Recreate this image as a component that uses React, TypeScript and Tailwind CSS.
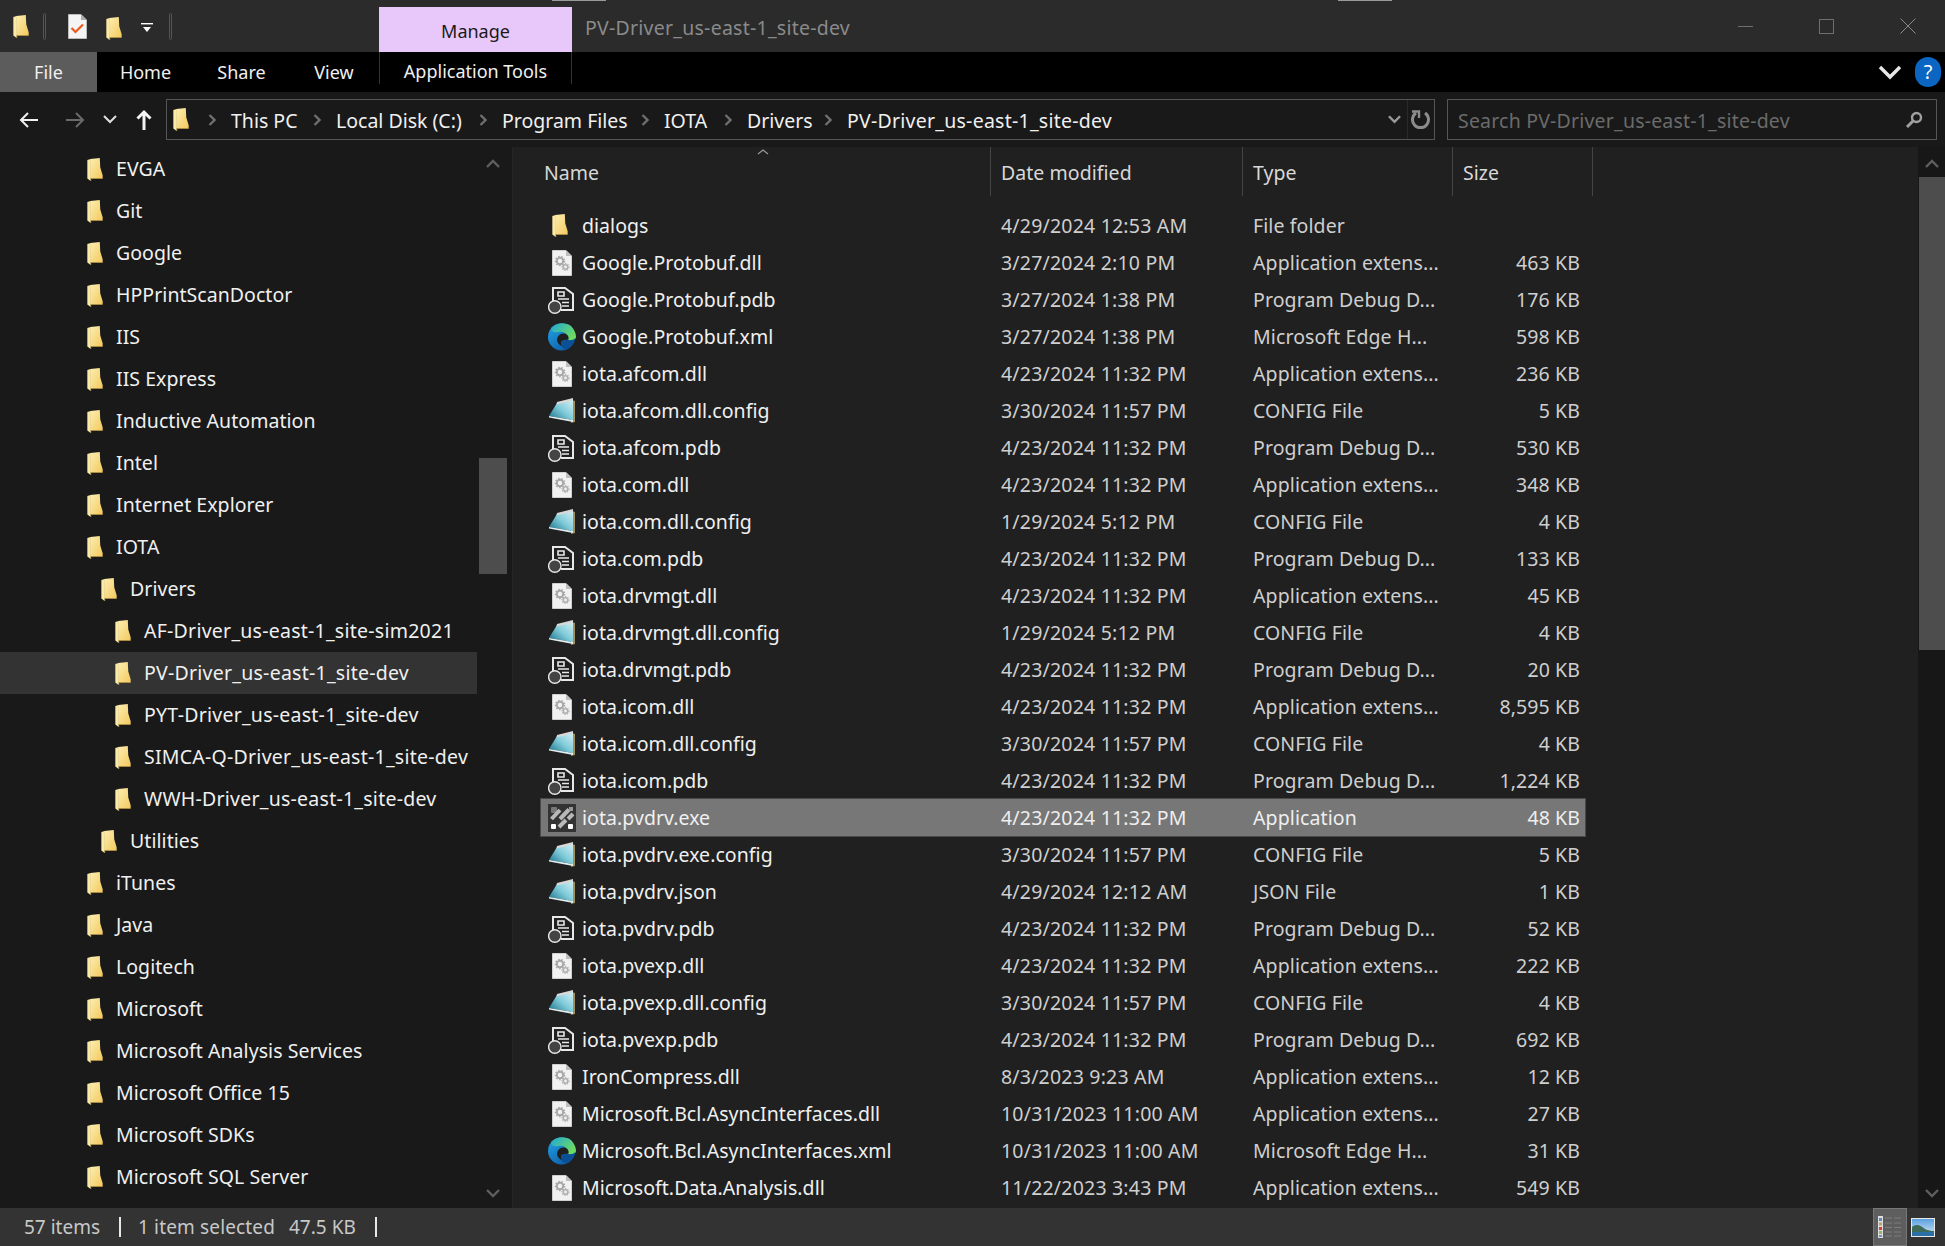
import React from "react";

const Folder = ({ className = "" }: { className?: string }) => (
  <svg viewBox="0 0 16 24" className={"w-[16px] h-[23px] shrink-0 " + className}>
    <defs>
      <linearGradient id="fg" x1="0" y1="0" x2="1" y2="1">
        <stop offset="0" stopColor="#fdeeb0" />
        <stop offset="1" stopColor="#f3c95f" />
      </linearGradient>
    </defs>
    <path d="M3 1 L13 0 L13.5 10 L16 18 V21 H3 Z" fill="url(#fg)" />
    <path d="M0 2 L3.5 1 V24 L0 21.5 Z" fill="#fbe9a6" />
    <path d="M3.5 21 H16 V22 H4 V24 H3.5 Z" fill="#caa24a" />
  </svg>
);

const PageGears = () => (
  <svg viewBox="0 0 20 26" className="w-[20px] h-[26px]">
    <path d="M0.5 0.5 H14 L19.5 6 V25.5 H0.5 Z" fill="#f1f1f1" stroke="#cfcfcf" />
    <path d="M14 0.5 V6 H19.5 Z" fill="#bdbdbd" />
    <circle cx="8" cy="11" r="3.2" fill="none" stroke="#a8a8a8" strokeWidth="2" />
    <circle cx="8" cy="11" r="4.6" fill="none" stroke="#a8a8a8" strokeWidth="1.4" strokeDasharray="1.6 1.6" />
    <circle cx="13.5" cy="17" r="2.2" fill="none" stroke="#b0b0b0" strokeWidth="1.6" />
    <circle cx="13.5" cy="17" r="3.5" fill="none" stroke="#b0b0b0" strokeWidth="1.2" strokeDasharray="1.3 1.3" />
  </svg>
);

const Pdb = () => (
  <svg viewBox="0 0 28 28" className="w-[28px] h-[28px]">
    <path d="M5 15 V2 H17 L25 8 V24 H13" fill="none" stroke="#e8e8e8" strokeWidth="2" />
    <path d="M10 6 H16 V10 H10 Z M10 13 H21 M14 16.5 H21 M14 20 H21" fill="none" stroke="#e8e8e8" strokeWidth="1.6" />
    <circle cx="6.8" cy="21" r="6.2" fill="#444444" stroke="#e8e8e8" strokeWidth="1.4" />
  </svg>
);

const Config = () => (
  <svg viewBox="0 0 26 25" className="w-[26px] h-[25px]">
    <defs>
      <linearGradient id="cg" x1="0" y1="1" x2="1" y2="0">
        <stop offset="0" stopColor="#156f88" />
        <stop offset="0.5" stopColor="#7fcbd9" />
        <stop offset="1" stopColor="#d9f1f5" />
      </linearGradient>
    </defs>
    <path d="M23 2 L26 3 V24 L22 25 Z" fill="#a08f5f" />
    <path d="M8 5 L24 1 V22 L0 18 Z" fill="url(#cg)" />
    <path d="M0 18 L24 22 V24 L0 19.5 Z" fill="#dfeef1" />
    <path d="M8 4 L24 0 V2.5 L7.5 6.5 Z" fill="#d8d8d8" />
  </svg>
);

const Edge = () => (
  <svg viewBox="0 0 28 28" className="w-[28px] h-[28px]">
    <defs>
      <linearGradient id="eb" x1="0" y1="0" x2="0.7" y2="1">
        <stop offset="0" stopColor="#25a5e8" />
        <stop offset="1" stopColor="#0c5ea8" />
      </linearGradient>
      <linearGradient id="eg" x1="0" y1="0" x2="1" y2="0.6">
        <stop offset="0" stopColor="#1fa9d8" />
        <stop offset="1" stopColor="#6fdc5f" />
      </linearGradient>
    </defs>
    <circle cx="13.5" cy="14" r="13.5" fill="url(#eb)" />
    <path d="M3 5 C8 -1 18 -1 23 3 C26 6 28 10 28 14 C28 17 24 18.5 20 17 C21 12 16 8 11 9 C7 10 3 9 3 5 Z" fill="url(#eg)" />
    <path d="M10 20 C7 15 12 9 18 11 C20 12 21 14 20.5 16.5 C17 17 13 17 13 20 C13 21 14 23 17 24 C14 24 11.5 22 10 20 Z" fill="#1f1f1f" />
    <path d="M13 20 C13 17.5 16 17 20 17 C23 17.5 26 17 27 15 C27 21 22 26 17 26 C14 25.5 13 22.5 13 20 Z" fill="#0b4f96" />
  </svg>
);

const Exe = () => (
  <svg viewBox="0 0 28 28" className="w-[28px] h-[28px]">
    <rect width="28" height="28" fill="#333" />
    <rect x="3" y="3" width="6" height="6" rx="1" fill="#777" />
    <rect x="20" y="20" width="5" height="5" rx="1" fill="#fff" />
    <rect x="3" y="20" width="5" height="5" rx="1" fill="#fff" />
    <path d="M3.5 15 L12 6 M12 15 L21 5.5 M20 15 L25 10 M11 23 L18 16" stroke="#b8b8b8" strokeWidth="4" />
    <rect x="21" y="3" width="4" height="4" fill="#999" />
  </svg>
);

type Kind = "folder" | "dll" | "pdb" | "xml" | "config" | "exe";

const icons: Record<Kind, React.ReactNode> = {
  folder: <Folder className="mr-[4px]" />,
  dll: <PageGears />,
  pdb: <Pdb />,
  xml: <Edge />,
  config: <Config />,
  exe: <Exe />,
};

const DLL = "Application extens...";
const PDB = "Program Debug D...";
const XML = "Microsoft Edge H...";
const CFG = "CONFIG File";
const D1 = "4/23/2024 11:32 PM";
const D2 = "3/30/2024 11:57 PM";
const D3 = "1/29/2024 5:12 PM";

const files: [Kind, string, string, string, string][] = [
  ["folder", "dialogs", "4/29/2024 12:53 AM", "File folder", ""],
  ["dll", "Google.Protobuf.dll", "3/27/2024 2:10 PM", DLL, "463 KB"],
  ["pdb", "Google.Protobuf.pdb", "3/27/2024 1:38 PM", PDB, "176 KB"],
  ["xml", "Google.Protobuf.xml", "3/27/2024 1:38 PM", XML, "598 KB"],
  ["dll", "iota.afcom.dll", D1, DLL, "236 KB"],
  ["config", "iota.afcom.dll.config", D2, CFG, "5 KB"],
  ["pdb", "iota.afcom.pdb", D1, PDB, "530 KB"],
  ["dll", "iota.com.dll", D1, DLL, "348 KB"],
  ["config", "iota.com.dll.config", D3, CFG, "4 KB"],
  ["pdb", "iota.com.pdb", D1, PDB, "133 KB"],
  ["dll", "iota.drvmgt.dll", D1, DLL, "45 KB"],
  ["config", "iota.drvmgt.dll.config", D3, CFG, "4 KB"],
  ["pdb", "iota.drvmgt.pdb", D1, PDB, "20 KB"],
  ["dll", "iota.icom.dll", D1, DLL, "8,595 KB"],
  ["config", "iota.icom.dll.config", D2, CFG, "4 KB"],
  ["pdb", "iota.icom.pdb", D1, PDB, "1,224 KB"],
  ["exe", "iota.pvdrv.exe", D1, "Application", "48 KB"],
  ["config", "iota.pvdrv.exe.config", D2, CFG, "5 KB"],
  ["config", "iota.pvdrv.json", "4/29/2024 12:12 AM", "JSON File", "1 KB"],
  ["pdb", "iota.pvdrv.pdb", D1, PDB, "52 KB"],
  ["dll", "iota.pvexp.dll", D1, DLL, "222 KB"],
  ["config", "iota.pvexp.dll.config", D2, CFG, "4 KB"],
  ["pdb", "iota.pvexp.pdb", D1, PDB, "692 KB"],
  ["dll", "IronCompress.dll", "8/3/2023 9:23 AM", DLL, "12 KB"],
  ["dll", "Microsoft.Bcl.AsyncInterfaces.dll", "10/31/2023 11:00 AM", DLL, "27 KB"],
  ["xml", "Microsoft.Bcl.AsyncInterfaces.xml", "10/31/2023 11:00 AM", XML, "31 KB"],
  ["dll", "Microsoft.Data.Analysis.dll", "11/22/2023 3:43 PM", DLL, "549 KB"],
];

const nav: [number, string][] = [
  [0, "EVGA"], [0, "Git"], [0, "Google"], [0, "HPPrintScanDoctor"], [0, "IIS"], [0, "IIS Express"],
  [0, "Inductive Automation"], [0, "Intel"], [0, "Internet Explorer"], [0, "IOTA"], [1, "Drivers"],
  [2, "AF-Driver_us-east-1_site-sim2021"], [2, "PV-Driver_us-east-1_site-dev"], [2, "PYT-Driver_us-east-1_site-dev"],
  [2, "SIMCA-Q-Driver_us-east-1_site-dev"], [2, "WWH-Driver_us-east-1_site-dev"], [1, "Utilities"],
  [0, "iTunes"], [0, "Java"], [0, "Logitech"], [0, "Microsoft"], [0, "Microsoft Analysis Services"],
  [0, "Microsoft Office 15"], [0, "Microsoft SDKs"], [0, "Microsoft SQL Server"],
];

const indent = ["pl-[87px]", "pl-[101px]", "pl-[115px]"];

const Chev = () => (
  <svg viewBox="0 0 8 12" className="w-[8px] h-[12px]">
    <path d="M1.5 1 L6.5 6 L1.5 11" fill="none" stroke="#6e6e6e" strokeWidth="2.4" />
  </svg>
);

const ScrollArrow = ({ up }: { up?: boolean }) => (
  <svg viewBox="0 0 14 9" className="w-[14px] h-[9px]">
    <path d={up ? "M1 8 L7 2 L13 8" : "M1 1 L7 7 L13 1"} fill="none" stroke="#5f5f5f" strokeWidth="2.4" />
  </svg>
);

const crumbs: [string, string, string][] = [
  ["This PC", "w-[42px]", "w-[67px]"],
  ["Local Disk (C:)", "w-[38px]", "w-[128px]"],
  ["Program Files", "w-[38px]", "w-[124px]"],
  ["IOTA", "w-[38px]", "w-[45px]"],
  ["Drivers", "w-[38px]", "w-[62px]"],
  ["PV-Driver_us-east-1_site-dev", "w-[38px]", "tracking-[0.25px]"],
];

export default function App() {
  return (
    <div className="w-[1945px] h-[1246px] overflow-hidden flex flex-col bg-[#202020] text-[19.5px] font-['Noto_Sans',sans-serif] text-[#f0f0f0]">
      {/* top edge marks */}
      <div className="h-px flex shrink-0 bg-[#2b2b2b]">
        <div className="ml-[552px] w-[54px] bg-[#9a9a9a]" />
        <div className="ml-[732px] w-[54px] bg-[#9a9a9a]" />
      </div>
      {/* title bar */}
      <div className="h-[51px] shrink-0 bg-[#2b2b2b] flex items-center">
        <Folder className="ml-[13px]" />
        <div className="ml-[14px] w-[3px] h-[27px] border border-[#555] rounded-sm" />
        <svg viewBox="0 0 19 25" className="ml-[22px] w-[19px] h-[25px]">
          <path d="M0.5 0.5 H13 L18.5 6 V24.5 H0.5 Z" fill="#f4f4f4" stroke="#bbb" />
          <path d="M13 0.5 V6 H18.5 Z" fill="#aaa" />
          <path d="M3.5 14 L7.5 18 L15 10.5" fill="none" stroke="#ea5a1f" strokeWidth="2.2" />
        </svg>
        <Folder className="ml-[19px] mt-[3px]" />
        <svg viewBox="0 0 12 12" className="ml-[19px] w-[12px] h-[12px] mt-[5px]">
          <rect x="0" y="0" width="12" height="1.4" fill="#fff" />
          <path d="M2 4 H10 L6 9 Z" fill="#fff" />
        </svg>
        <div className="ml-[16px] w-[3px] h-[27px] border border-[#555] rounded-sm" />
        <div className="ml-[207px] self-end w-[193px] h-[45px] bg-[#e8c8fa] text-[#1a1a1a] text-[18px] flex items-center justify-center pt-[4px]">
          Manage
        </div>
        <div className="ml-[13px] text-[#8a8a8a] mt-[2px] tracking-[0.25px]">PV-Driver_us-east-1_site-dev</div>
        <div className="ml-auto flex items-center -mt-[1px]">
          <div className="w-[15px] h-px bg-[#6e6e6e]" />
          <div className="ml-[66px] w-[15px] h-[15px] border border-[#6e6e6e]" />
          <svg viewBox="0 0 16 16" className="ml-[66px] mr-[29px] w-[16px] h-[16px]">
            <path d="M0.5 0.5 L15.5 15.5 M15.5 0.5 L0.5 15.5" stroke="#8a8a8a" strokeWidth="1" />
          </svg>
        </div>
      </div>
      {/* ribbon tabs */}
      <div className="h-[40px] shrink-0 bg-black flex text-[18px]">
        <div className="w-[97px] bg-[#5c5c5c] flex items-center justify-center">File</div>
        <div className="w-[97px] flex items-center justify-center">Home</div>
        <div className="w-[95px] flex items-center justify-center">Share</div>
        <div className="w-[90px] flex items-center justify-center">View</div>
        <div className="w-[193px] h-[32px] border-x border-[#333] flex items-start justify-center pt-[6px]">Application Tools</div>
        <div className="ml-auto flex items-center">
          <svg viewBox="0 0 24 16" className="w-[24px] h-[16px]">
            <path d="M2 3 L12 13 L22 3" fill="none" stroke="#e8e8e8" strokeWidth="3.4" />
          </svg>
          <div className="ml-[13px] mr-[4px] w-[26px] h-[30px] rounded-full bg-[#0a66c2] text-white text-[20px] flex items-center justify-center">?</div>
        </div>
      </div>
      {/* address row */}
      <div className="h-[55px] shrink-0 bg-[#191919] flex items-center">
        <svg viewBox="0 0 20 18" className="ml-[19px] w-[20px] h-[18px]">
          <path d="M19 9 H2 M9 2 L2 9 L9 16" fill="none" stroke="#f0f0f0" strokeWidth="2" />
        </svg>
        <svg viewBox="0 0 20 18" className="ml-[26px] w-[20px] h-[18px]">
          <path d="M1 9 H18 M11 2 L18 9 L11 16" fill="none" stroke="#6a6a6a" strokeWidth="2" />
        </svg>
        <svg viewBox="0 0 14 9" className="ml-[18px] w-[14px] h-[9px]">
          <path d="M1 1 L7 7 L13 1" fill="none" stroke="#e0e0e0" strokeWidth="2" />
        </svg>
        <svg viewBox="0 0 16 22" className="ml-[19px] w-[16px] h-[22px]">
          <path d="M8 21 V3 M1.5 9.5 L8 3 L14.5 9.5" fill="none" stroke="#f4f4f4" strokeWidth="3" />
        </svg>
        <div className="ml-[14px] w-[1269px] h-[41px] border border-[#555] flex items-center">
          <Folder className="ml-[6px]" />
          <div className="flex items-center shrink-0">
            {crumbs.map(([c, slot, w]) => (
              <div key={c} className="flex items-center whitespace-nowrap shrink-0">
                <div className={"shrink-0 flex justify-end pr-[15px] " + slot}><Chev /></div>
                <span className={"shrink-0 mt-[2px] " + w}>{c}</span>
              </div>
            ))}
          </div>
          <div className="ml-auto flex items-center h-full">
            <svg viewBox="0 0 14 9" className="w-[13px] h-[9px]">
              <path d="M1 1 L7 7 L13 1" fill="none" stroke="#9a9a9a" strokeWidth="2.6" />
            </svg>
            <div className="ml-[6px] w-px h-full bg-[#2a2a2a]" />
            <svg viewBox="0 0 20 20" className="ml-[3px] mr-[3px] w-[20px] h-[20px]">
              <path d="M5 3 A8 8 0 1 0 14 3" fill="none" stroke="#8c8c8c" strokeWidth="3" />
              <path d="M1 1.5 H8 V8" fill="none" stroke="#8c8c8c" strokeWidth="2.4" />
            </svg>
          </div>
        </div>
        <div className="ml-[12px] w-[490px] h-[41px] border border-[#555] flex items-center pl-[10px] text-[#6b6b6b]">
          <span className="tracking-[0.2px] mt-[2px]">Search PV-Driver_us-east-1_site-dev</span>
          <svg viewBox="0 0 18 18" className="ml-auto mr-[13px] w-[18px] h-[18px]">
            <circle cx="11.5" cy="6.5" r="4.5" fill="none" stroke="#a0a0a0" strokeWidth="2.4" />
            <path d="M8 10 L2 16" stroke="#a0a0a0" strokeWidth="3" />
          </svg>
        </div>
      </div>
      {/* body */}
      <div className="flex-1 min-h-0 flex overflow-hidden">
        {/* nav */}
        <div className="w-[513px] shrink-0 bg-[#191919] flex border-r border-[#252525]">
          <div className="w-[477px] mr-[2px] shrink-0 overflow-hidden pt-px">
            {nav.map(([lvl, name]) => {
              const sel = name.startsWith("PV-Driver");
              return (
                <div
                  key={name}
                  className={"h-[42px] flex items-center whitespace-nowrap " + indent[lvl] + (sel ? " bg-[#333333]" : "")}
                >
                  <Folder />
                  <span className={"ml-[13px] " + (lvl === 2 ? "tracking-[0.25px]" : "tracking-[0.05px]")}>{name}</span>
                </div>
              );
            })}
          </div>
          <div className="w-[28px] shrink-0 flex flex-col">
            <div className="h-[311px] flex justify-center pt-[12px]"><ScrollArrow up /></div>
            <div className="h-[116px] bg-[#4d4d4d]" />
            <div className="flex-1 flex justify-center items-end pb-[10px]"><ScrollArrow /></div>
          </div>
        </div>
        {/* files */}
        <div className="flex-1 min-w-0 flex">
          <div className="flex-1 min-w-0 overflow-hidden">
            <div className="relative h-[49px] flex text-[#d8d8d8]">
              <svg viewBox="0 0 12 6" className="absolute left-[244px] top-[2px] w-[12px] h-[6px]">
                <path d="M1 5 L6 1 L11 5" fill="none" stroke="#9a9a9a" strokeWidth="1.2" />
              </svg>
              <div className="w-[478px] border-r border-[#444] pl-[31px] pt-[11px]">Name</div>
              <div className="w-[252px] border-r border-[#444] pl-[10px] pt-[11px] tracking-[0.05px]">Date modified</div>
              <div className="w-[210px] border-r border-[#444] pl-[10px] pt-[11px]">Type</div>
              <div className="w-[140px] border-r border-[#444] pl-[10px] pt-[11px]">Size</div>
            </div>
            <div className="pt-[11px] pl-[28px]">
              {files.map(([k, name, date, type, size]) => {
                const sel = name === "iota.pvdrv.exe";
                const sub = sel ? "text-[#eeeeee]" : "text-[#cfcfcf]";
                return (
                  <div
                    key={name}
                    className={"w-[1044px] h-[37px] flex items-center whitespace-nowrap " + (sel ? "bg-[#777777] ring-1 ring-[#4a4a4a]" : "")}
                  >
                    <div className="w-[41px] flex justify-center items-center">{icons[k]}</div>
                    <div className="w-[419px] tracking-[0.05px]">{name}</div>
                    <div className={"w-[252px] tracking-[0.2px] " + sub}>{date}</div>
                    <div className={"w-[196px] tracking-[0.1px] " + sub}>{type}</div>
                    <div className={"w-[131px] text-right tracking-[0.1px] " + sub}>{size}</div>
                  </div>
                );
              })}
            </div>
          </div>
          <div className="w-[27px] shrink-0 bg-[#171717] flex flex-col">
            <div className="h-[30px] flex justify-center pt-[12px]"><ScrollArrow up /></div>
            <div className="h-[473px] bg-[#4d4d4d] ml-px" />
            <div className="flex-1 flex justify-center items-end pb-[10px]"><ScrollArrow /></div>
          </div>
        </div>
      </div>
      {/* status bar */}
      <div className="h-[38px] shrink-0 bg-[#333333] flex items-center text-[#c8c8c8] text-[19px]">
        <span className="ml-[24px] w-[95px]">57 items</span>
        <div className="w-[2px] h-[20px] bg-[#e8e8e8]" />
        <span className="ml-[17px] w-[151px] tracking-[0.15px]">1 item selected</span>
        <span className="w-[86px]">47.5 KB</span>
        <div className="w-[2px] h-[20px] bg-[#e8e8e8]" />
        <div className="ml-auto self-stretch w-[34px] bg-[#5e5e5e] border border-[#777] flex items-center justify-center">
          <svg viewBox="0 0 24 24" className="w-[24px] h-[24px]">
            <rect x="0" y="1" width="5" height="22" fill="#ddd" />
            <rect x="1" y="3" width="3" height="3" fill="#5a8ac0" />
            <rect x="1" y="7.5" width="3" height="3" fill="#c0a060" />
            <rect x="1" y="12" width="3" height="3" fill="#d04040" />
            <rect x="1" y="16" width="3" height="3" fill="#a0b060" />
            <rect x="1" y="20" width="3" height="2" fill="#7090c0" />
            <path d="M7 3 H14 M16 3 H23 M7 8 H14 M16 8 H23 M7 12.5 H14 M16 12.5 H23 M7 17 H14 M16 17 H23 M7 21 H14 M16 21 H23" stroke="#7d7d7d" strokeWidth="1" />
          </svg>
        </div>
        <svg viewBox="0 0 24 19" className="ml-[4px] mr-[10px] w-[24px] h-[19px]">
          <defs>
            <linearGradient id="sky" x1="0" y1="0" x2="0" y2="1">
              <stop offset="0" stopColor="#5aa0e0" />
              <stop offset="1" stopColor="#d8eaf6" />
            </linearGradient>
          </defs>
          <rect width="24" height="19" fill="#e8e8e8" />
          <rect x="1" y="1" width="22" height="17" fill="url(#sky)" />
          <path d="M1 9 C6 5 10 8 14 11 C17 12.5 20 13 23 13 V14 H1 Z" fill="#3d6b58" />
          <rect x="1" y="14" width="22" height="4" fill="#2b6fa8" />
        </svg>
      </div>
    </div>
  );
}
